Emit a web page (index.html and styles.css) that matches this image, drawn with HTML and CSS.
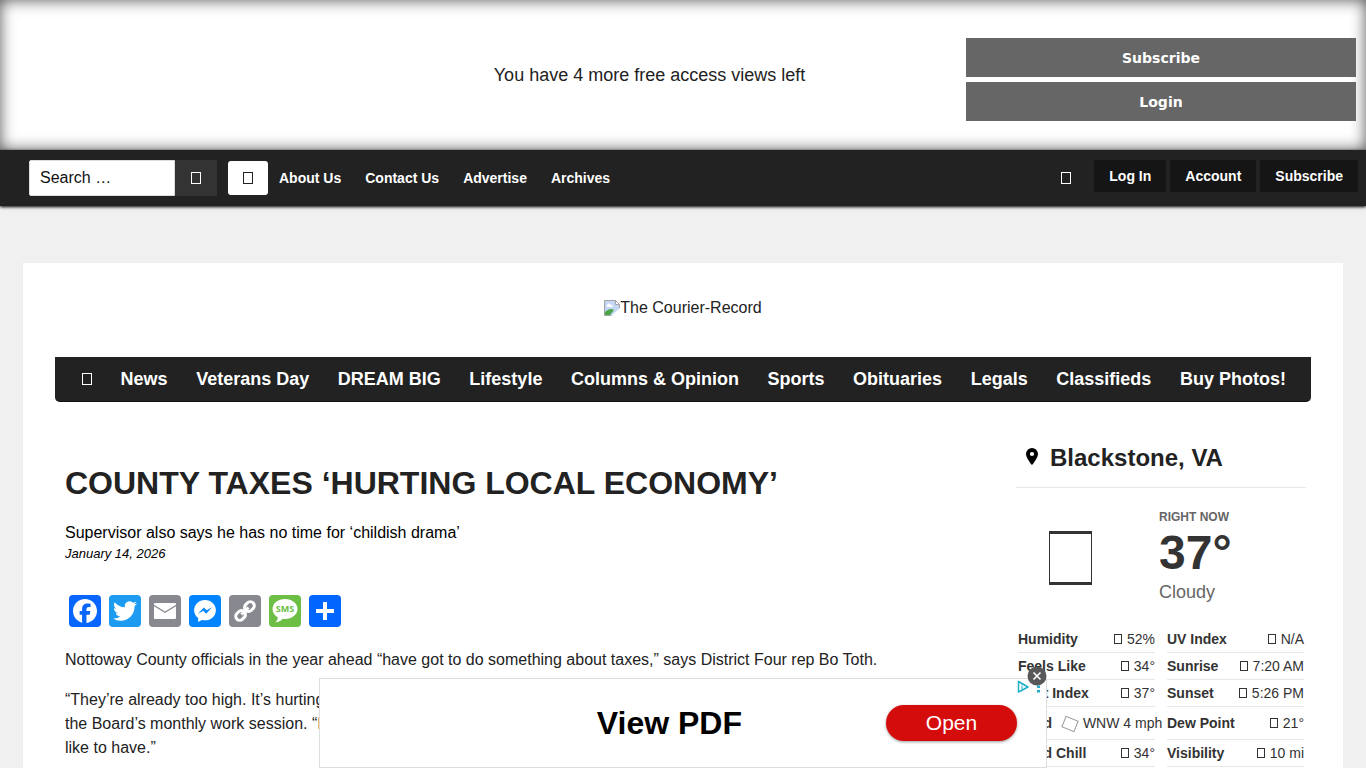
FILE: index.html
```
<!DOCTYPE html>
<html lang="en">

<head>
    <meta charset="UTF-8">
    <meta name="viewport" content="width=device-width, initial-scale=1.0">
    <title>The Courier-Record</title>

    <link rel="stylesheet" href="styles.css">
</head>

<body>
    <div class="meter">
        <p class="meter-text">You have 4 more free access views left</p>
        <div class="meter-actions">
            <button type="button">Subscribe</button>
            <button type="button">Login</button>
        </div>
    </div>

    <header class="topbar">
        <form class="search">
            <input type="text" name="s" placeholder="Search …" aria-label="Search">
            <button type="submit" aria-label="Submit search"><span class="glyph"></span></button>
        </form>
        <button type="button" class="social-btn" aria-label="Facebook"><span class="glyph"></span></button>
        <nav class="top-links">
            <a href="#">About Us</a>
            <a href="#">Contact Us</a>
            <a href="#">Advertise</a>
            <a href="#">Archives</a>
        </nav>
        <div class="account">
            <a href="#" class="cart" aria-label="Cart"><span class="glyph"></span></a>
            <a href="#" class="account-link">Log In</a>
            <a href="#" class="account-link">Account</a>
            <a href="#" class="account-link">Subscribe</a>
        </div>
    </header>

    <div class="page">
        <a href="#" class="logo">
            <svg width="16" height="16" viewBox="0 0 16 16">
                <path d="M0.500 0.500h11l4 4v11h-15z" fill="#c4d7f5" stroke="#a3a3a3" />
                <path d="M3 6a2 2 0 0 1 4-1 2 2 0 0 1 2 2H3z" fill="#fff" />
                <path d="M1 15v-3q5-5 9-2l-4 5z" fill="#4ca547" />
                <path d="M16 8L7 16h9z" fill="#fff" />
                <path d="M11.500 0.500v4h4z" fill="#fff" stroke="#a3a3a3" />
            </svg>
            <span>The Courier-Record</span>
        </a>

        <nav class="main-nav">
            <a href="#" aria-label="Home"><span class="glyph"></span></a>
            <a href="#">News</a>
            <a href="#">Veterans Day</a>
            <a href="#">DREAM BIG</a>
            <a href="#">Lifestyle</a>
            <a href="#">Columns &amp; Opinion</a>
            <a href="#">Sports</a>
            <a href="#">Obituaries</a>
            <a href="#">Legals</a>
            <a href="#">Classifieds</a>
            <a href="#">Buy Photos!</a>
        </nav>

        <div class="columns">
            <main class="article">
                <h1>COUNTY TAXES ‘HURTING LOCAL ECONOMY’</h1>
                <p class="subhead">Supervisor also says he has no time for ‘childish drama’</p>
                <p class="date">January 14, 2026</p>

                <div class="share">
                    <a href="#" class="facebook" aria-label="Facebook">
                        <svg viewBox="0 0 32 32"><path fill="#fff" d="M28 16c0-6.627-5.373-12-12-12S4 9.373 4 16c0 5.628 3.875 10.350 9.101 11.647v-7.980h-2.474V16H13.100v-1.580c0-4.085 1.849-5.978 5.859-5.978.760 0 2.072.150 2.608.298v3.325c-.283-.030-.775-.045-1.386-.045-1.967 0-2.728.745-2.728 2.683V16h3.920l-.673 3.667h-3.247v8.245C23.395 27.195 28 22.135 28 16" /></svg>
                    </a>
                    <a href="#" class="twitter" aria-label="Twitter">
                        <svg viewBox="0 0 32 32"><path fill="#fff" d="M28 8.557a10 10 0 0 1-2.828.775 4.930 4.930 0 0 0 2.166-2.725 9.700 9.700 0 0 1-3.130 1.194 4.920 4.920 0 0 0-3.593-1.550 4.924 4.924 0 0 0-4.794 6.049c-4.090-.210-7.720-2.170-10.150-5.150a4.940 4.940 0 0 0-.665 2.477c0 1.710.870 3.214 2.190 4.100a5 5 0 0 1-2.230-.616v.060c0 2.390 1.700 4.380 3.952 4.830-.414.115-.850.174-1.297.174q-.476-.001-.928-.086a4.935 4.935 0 0 0 4.600 3.420 9.900 9.900 0 0 1-6.114 2.107q-.597 0-1.175-.068a13.950 13.950 0 0 0 7.550 2.213c9.056 0 14.010-7.507 14.010-14.013q0-.320-.015-.637c.960-.695 1.795-1.560 2.455-2.550z" /></svg>
                    </a>
                    <a href="#" class="grey" aria-label="Email">
                        <svg viewBox="0 0 32 32"><path fill="#fff" d="M5 11.300L16 18l11-6.700V23a1 1 0 0 1-1 1H6a1 1 0 0 1-1-1zM6 8h20a1 1 0 0 1 1 1v.700L16 16.400 5 9.700V9a1 1 0 0 1 1-1z" /></svg>
                    </a>
                    <a href="#" class="messenger" aria-label="Messenger">
                        <svg viewBox="0 0 32 32"><path fill="#fff" d="M16 5C9.986 5 5.110 9.560 5.110 15.182c0 3.200 1.580 6.054 4.046 7.920V27l3.716-2.060c.990.276 2.040.425 3.128.425 6.014 0 10.890-4.560 10.890-10.183S22.013 5 16 5m1.147 13.655L14.330 15.730l-5.423 3 5.946-6.310 2.816 2.925 5.420-3-5.946 6.310z" /></svg>
                    </a>
                    <a href="#" class="grey" aria-label="Copy link">
                        <svg viewBox="0 0 32 32"><g transform="rotate(-45 16 16)" fill="none" stroke="#fff" stroke-width="3"><rect x="4.500" y="12" width="10.500" height="8" rx="4" /><rect x="17" y="12" width="10.500" height="8" rx="4" /><path d="M11 16h10" /></g></svg>
                    </a>
                    <a href="#" class="sms" aria-label="SMS">
                        <svg viewBox="0 0 32 32"><path fill="#fff" d="M16 4C9 4 3.500 8.300 3.500 14c0 3.500 2 6.400 5.200 8.200.200 2-.700 3.800-2.400 5.300 3.200-.200 5.600-1.600 7.300-3.700.800.100 1.600.200 2.400.200 7 0 12.500-4.400 12.500-10S23 4 16 4z" /><text x="16" y="17" text-anchor="middle">SMS</text></svg>
                    </a>
                    <a href="#" class="more" aria-label="More">
                        <svg viewBox="0 0 32 32"><path fill="#fff" d="M14 7h4v18h-4zM7 14h18v4H7z" /></svg>
                    </a>
                </div>

                <p>Nottoway County officials in the year ahead “have got to do something about taxes,” says District Four rep Bo Toth.</p>
                <p>“They’re already too high. It’s hurting<br>the Board’s monthly work session. “I<br>like to have.”</p>
            </main>

            <aside class="weather">
                <h2>
                    <svg width="12" height="17" viewBox="0 0 12 17"><path fill-rule="evenodd" d="M6 0a6 6 0 0 0-6 6c0 4.300 6 11 6 11s6-6.700 6-11a6 6 0 0 0-6-6zm0 3.900a2.100 2.100 0 1 1 0 4.200 2.100 2.100 0 0 1 0-4.200z" /></svg>
                    Blackstone, VA
                </h2>
                <div class="now">
                    <span class="now-icon"></span>
                    <div class="now-info">
                        <p class="now-label">RIGHT NOW</p>
                        <p class="now-temp">37°</p>
                        <p class="now-sky">Cloudy</p>
                    </div>
                </div>
                <div class="details">
                    <table>
                        <tr><th scope="row">Humidity</th><td><span class="glyph"></span> 52%</td></tr>
                        <tr><th scope="row">Feels Like</th><td><span class="glyph"></span> 34°</td></tr>
                        <tr><th scope="row">Heat Index</th><td><span class="glyph"></span> 37°</td></tr>
                        <tr class="wind"><th scope="row">Wind</th><td><span class="glyph arrow"></span> WNW 4 mph</td></tr>
                        <tr><th scope="row">Wind Chill</th><td><span class="glyph"></span> 34°</td></tr>
                    </table>
                    <table>
                        <tr><th scope="row">UV Index</th><td><span class="glyph"></span> N/A</td></tr>
                        <tr><th scope="row">Sunrise</th><td><span class="glyph"></span> 7:20 AM</td></tr>
                        <tr><th scope="row">Sunset</th><td><span class="glyph"></span> 5:26 PM</td></tr>
                        <tr class="wind"><th scope="row">Dew Point</th><td><span class="glyph"></span> 21°</td></tr>
                        <tr><th scope="row">Visibility</th><td><span class="glyph"></span> 10 mi</td></tr>
                    </table>
                </div>
            </aside>
        </div>
    </div>

    <div class="ad">
        <span class="ad-title">View PDF</span>
        <button type="button" class="ad-open">Open</button>
        <svg class="ad-choices" width="28" height="14" viewBox="0 0 28 14">
            <path d="M1.500 1.500v10.500L11 7z" fill="none" stroke="#1fb0c8" stroke-width="1.500" stroke-linejoin="round" />
            <path d="M5 5.500v4M5 3.700v1" stroke="#1fb0c8" />
            <path d="M20 1h3v2.500h-3zM20 5.500h3v2.500h-3zM20 10h3v2.500h-3z" fill="#1fb0c8" />
        </svg>
        <button type="button" class="ad-close" aria-label="Close">
            <svg width="20" height="20" viewBox="0 0 20 20"><circle cx="10" cy="10" r="9.500" fill="#58585a" /><path d="M6.500 6.500l7 7M13.500 6.500l-7 7" stroke="#fff" stroke-width="1.600" /></svg>
        </button>
    </div>
</body>

</html>
```
FILE: styles.css
```
/* Global reset */

* {
    margin: 0;
    padding: 0;
    box-sizing: border-box;
}

body {
    font-family: Arial, "Liberation Sans", sans-serif;
    font-size: 16px;
    line-height: 24px;
    background-color: #f0f0f0;
    color: #222;
}

a {
    color: inherit;
    text-decoration: none;
}

button {
    border: none;
    font-family: inherit;
    cursor: pointer;
}

/* icon box */
.glyph {
    display: inline-block;
    width: 10px;
    height: 12px;
    margin-bottom: 2px;
    border: 1px solid currentColor;
    vertical-align: middle;
}

/* Access meter */

.meter {
    display: grid;
    grid-template-columns: 24% 1fr 390px;
    align-items: center;
    height: 150px;
    padding: 10px;
    background-color: #fff;
    box-shadow: inset 0 0 15px #555;
}

.meter-text {
    grid-column: 2;
    font-size: 18px;
    text-align: center;
}

.meter-actions {
    display: flex;
    flex-direction: column;
    gap: 5px;
    padding-top: 9px;
}

.meter-actions button {
    height: 39px;
    background-color: #666;
    color: #fff;
    font-family: Verdana, "DejaVu Sans", sans-serif;
    font-size: 14px;
    font-weight: bold;
}

/* Top bar */

.topbar {
    display: flex;
    align-items: flex-start;
    height: 56px;
    padding: 10px 8px 0 29px;
    background-color: #222;
    color: #fff;
    font-size: 14px;
    font-weight: bold;
    box-shadow: 0 1px 3px #000;
}

.search {
    display: flex;
    margin-right: 11px;
}

.search input {
    width: 146px;
    height: 36px;
    padding: 0 10px;
    border: 1px solid #ddd;
    border-radius: 2px 0 0 2px;
    background-color: #fff;
    font-family: inherit;
    font-size: 16px;
}

.search input::placeholder {
    color: #111;
}

.search button {
    width: 42px;
    height: 36px;
    background-color: #333;
    color: #fff;
}

.social-btn {
    width: 40px;
    height: 34px;
    margin: 1px 11px 0 0;
    border-radius: 3px;
    background-color: #fff;
    color: #222;
}

.top-links {
    display: flex;
    gap: 24px;
    line-height: 36px;
}

.account {
    display: flex;
    align-items: flex-start;
    gap: 4px;
    margin-left: auto;
    line-height: 32px;
}

.cart {
    margin-right: 19px;
    line-height: 36px;
}

.account-link {
    padding: 0 15px;
    background-color: #151515;
}

/* Page */

.page {
    max-width: 1320px;
    margin: 57px auto 0;
    padding: 32px;
    background-color: #fff;
}

.logo {
    display: flex;
    justify-content: center;
    align-items: center;
    padding: 1px 0 37px;
}

.main-nav {
    display: flex;
    justify-content: space-between;
    padding: 0 25px 0 27px;
    background-color: #222;
    color: #fff;
    font-size: 18px;
    font-weight: bold;
    line-height: 44px;
    border-bottom: 1px solid #111;
    border-radius: 0 0 5px 5px;
}

.columns {
    display: flex;
    justify-content: space-between;
    padding: 39px 5px 0 10px;
}

.article {
    flex: 1;
    padding-right: 40px;
}

.article h1 {
    padding-top: 22px;
    font-size: 32px;
    line-height: 40px;
}

.article p {
    margin-bottom: 16px;
}

.article .subhead {
    margin: 18px 0 0;
    color: #000;
}

.article .date {
    margin: 0;
    color: #000;
    font-size: 13px;
    font-style: italic;
    line-height: 18px;
}

/* Share buttons */

.share {
    display: flex;
    gap: 8px;
    padding: 32px 4px 21px;
}

.share a {
    width: 32px;
    height: 32px;
    border-radius: 4px;
}

.share svg {
    display: block;
}

.facebook {
    background-color: #0866ff;
}

.twitter {
    background-color: #1d9bf0;
}

.grey {
    background-color: #888990;
}

.messenger {
    background-color: #0084ff;
}

.sms {
    background-color: #6cbe45;
}

.sms text {
    fill: #6cbe45;
    font-family: "Open Sans", sans-serif;
    font-size: 9px;
    font-weight: bold;
}

.more {
    background-color: #0166ff;
}

/* Weather */

.weather {
    width: 290px;
}

.weather h2 {
    display: flex;
    align-items: flex-start;
    gap: 12px;
    padding: 0 10px 14px;
    border-bottom: 1px solid #e8e8e8;
    font-size: 24px;
    line-height: 34px;
    height: 47px;
}

.weather h2 svg {
    margin-top: 7px;
    fill: #000;
}

.now {
    display: flex;
    gap: 67px;
    padding: 20px 0 22px 33px;
}

.now-icon {
    width: 43px;
    height: 54px;
    margin-top: 23px;
    border: solid #333;
    border-width: 3px 1px;
}

.now-label {
    color: #666;
    font-size: 12px;
    font-weight: bold;
    line-height: 18px;
}

.now-temp {
    color: #333;
    font-size: 48px;
    font-weight: bold;
    line-height: 54px;
}

.now-sky {
    color: #666;
    font-size: 18px;
}

.details {
    display: flex;
    gap: 12px;
    padding: 0 2px;
}

.details table {
    flex: 1;
    width: 50%;
    table-layout: fixed;
    border-collapse: collapse;
    color: #333;
    font-size: 14px;
    line-height: 26px;
    white-space: nowrap;
}

.details tr {
    border-bottom: 1px solid #e8e8e8;
}

.details th {
    width: 45px;
    text-align: left;
}

.details td {
    text-align: right;
}

.details .glyph {
    width: 8px;
    height: 10px;
    margin-right: 1px;
}

.details .wind {
    line-height: 32px;
}

.details .glyph.arrow {
    width: 12px;
    height: 14px;
    margin: 0 3px 0 1px;
    border-color: #999;
    transform: rotate(112deg);
}

/* Bottom ad */

.ad {
    position: fixed;
    bottom: 0;
    left: 50%;
    display: flex;
    justify-content: flex-end;
    align-items: center;
    gap: 144px;
    width: 728px;
    height: 90px;
    padding-right: 29px;
    border: 1px solid #ddd;
    background-color: #fff;
    transform: translateX(-50%);
}

.ad-title {
    color: #000;
    font-size: 32px;
    font-weight: bold;
}

.ad-open {
    width: 131px;
    height: 36px;
    border-radius: 18px;
    background-color: #d50c0c;
    box-shadow: 0 1px 3px rgba(0, 0, 0, 0.4);
    color: #fff;
    font-size: 21px;
}

.ad-choices {
    position: absolute;
    top: 1px;
    right: 1px;
}

.ad-close {
    position: absolute;
    top: -13px;
    right: -1px;
    width: 20px;
    height: 20px;
    background: none;
}
```
